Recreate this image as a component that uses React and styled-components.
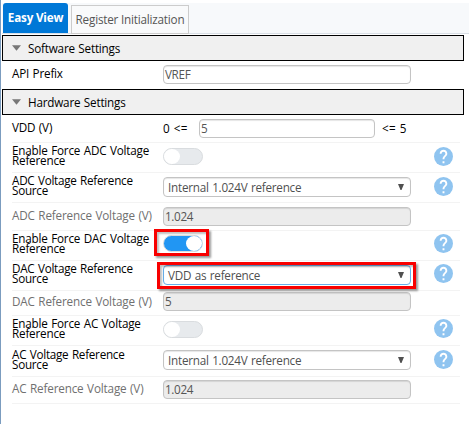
import React from "react";
import styled, { createGlobalStyle, css } from "styled-components";

const GlobalStyle = createGlobalStyle`
  *, *::before, *::after { box-sizing: border-box; }
  body { margin: 0; background: #fff; overflow: hidden; }
`;

const Panel = styled.main`
  height: 424px;
  border-left: 1px solid #7b9cbf;
  padding: 3px 2px 0 1px;
  background: #fff;
  color: #000;
  font-family: "Open Sans", "Noto Sans", sans-serif;
  font-size: 11.7px;
  word-spacing: 0.7px;
  white-space: nowrap;
`;

const TabBar = styled.nav`
  display: flex;
  align-items: flex-end;
  gap: 3px;
  height: 32px;
  padding: 0 0 1px 1px;
  background: linear-gradient(#f7f9fb 30px, #d9dfe6 30px, #d9dfe6 31px, #fff 31px);
`;

const Tab = styled.button`
  margin: 0;
  padding: 0 0 2px;
  font: inherit;
  text-align: center;
  white-space: nowrap;
  ${({ $active }) =>
    $active
      ? css`
          width: 65px;
          height: 30px;
          margin-bottom: 1px;
          border: 0;
          border-radius: 3px 3px 0 0;
          background: #0078d7;
          color: #fff;
          font-weight: 700;
          letter-spacing: -0.2px;
        `
      : css`
          width: 118px;
          height: 29px;
          border: 1px solid #ccc;
          background: #f9fafb;
          color: #555;
          letter-spacing: -0.2px;
        `}
`;

const SectionHeader = styled.h2`
  display: flex;
  align-items: center;
  gap: 7px;
  width: 462px;
  height: 26px;
  margin: 0;
  padding: 0 0 0 9px;
  border: 1px solid #000;
  background: #f0f0f0;
  font-size: 11.7px;
  font-weight: 400;
  letter-spacing: -0.2px;
`;

const Row = styled.div`
  display: grid;
  grid-template-columns: 151px 271px 26px;
  height: ${({ $height }) => $height}px;
  width: 448px;
  margin-left: 10px;
  border-bottom: 1px solid ${({ $plain }) => ($plain ? "transparent" : "#f3f3f3")};
`;

const Label = styled.label`
  padding-top: ${({ $top }) => $top}px;
  line-height: ${({ $double }) => ($double ? 10 : 16)}px;
  color: ${({ $muted }) => ($muted ? "#707070" : "#000")};
  letter-spacing: ${({ $spacing = -0.2 }) => $spacing}px;
`;

const LabelLine = styled.span`
  display: block;
`;

const Control = styled.div`
  display: flex;
  align-items: flex-start;
  padding-top: ${({ $top }) => $top}px;
`;

const Field = styled.div`
  width: ${({ $width = 248 }) => $width}px;
  height: 19px;
  padding-left: 1px;
  border: 1px solid #c4c4c4;
  border-radius: 4px;
  background: ${({ $disabled }) => ($disabled ? "#ececec" : "#fff")};
  box-shadow: inset 0 1px 1px rgba(0, 0, 0, 0.1);
  color: #555;
  line-height: 16px;
  letter-spacing: -0.35px;
`;

const Bound = styled.span`
  width: ${({ $width }) => $width}px;
  padding-left: ${({ $left = 0 }) => $left}px;
  line-height: 19px;
  letter-spacing: 0.2px;
`;

const Select = styled.div`
  display: flex;
  justify-content: space-between;
  width: 248px;
  height: 20px;
  padding: 0 5px 0 4px;
  border: 1px solid ${({ $focused }) => ($focused ? "#66afe9" : "#c4c4c4")};
  border-radius: 4px;
  background: #fff;
  box-shadow: inset 0 1px 1px rgba(0, 0, 0, 0.1);
  color: #505050;
  line-height: 18px;
  letter-spacing: -0.24px;
`;

const SelectArrow = styled.svg`
  width: 8px;
  height: 8px;
  margin-top: 5px;
  fill: #505050;
`;

const Track = styled.div`
  display: flex;
  justify-content: ${({ $on }) => ($on ? "flex-end" : "flex-start")};
  width: 40px;
  height: 17px;
  border: 1px solid ${({ $on }) => ($on ? "#dedede" : "#d9dcdf")};
  border-radius: 9px;
  background: ${({ $on }) => ($on ? "#2196f3" : "#e7eaed")};
`;

const Knob = styled.span`
  width: 16px;
  height: 15px;
  border-radius: 50%;
  background: #fff;
`;

const Callout = styled.div`
  position: relative;

  &::after {
    content: "";
    position: absolute;
    pointer-events: none;
    border: 3px solid #f80000;
    box-shadow: 2px 2px 2px rgba(0, 0, 0, 0.4), inset 2px 2px 2px rgba(0, 0, 0, 0.25);
    ${({ $kind }) =>
      $kind === "toggle"
        ? css`
            left: -9px;
            top: -6px;
            width: 55px;
            height: 27px;
          `
        : css`
            left: -6px;
            top: -3px;
            width: 259px;
            height: 27px;
          `}
  }
`;

const HelpIcon = styled.svg`
  width: 19px;
  height: 19px;
  margin-top: ${({ $top }) => $top}px;
`;

const Disclosure = styled.svg`
  width: 9px;
  height: 6px;
  fill: #777;
`;

function Section({ title }) {
  return (
    <SectionHeader>
      <Disclosure viewBox="0 0 10 6">
        <path d="M0 0H10L5 6Z" />
      </Disclosure>
      {title}
    </SectionHeader>
  );
}

function Help({ top }) {
  return (
    <HelpIcon $top={top} viewBox="2 2 20 20">
      <circle cx="12" cy="12" r="10" fill="#8fc4f0" />
      <path
        fill="#fff"
        d="M13 19h-2v-2h2v2zm2.07-7.75-.9.92C13.45 12.9 13 13.5 13 15h-2v-.5c0-1.1.45-2.1 1.17-2.83l1.24-1.26c.37-.36.59-.86.59-1.41 0-1.1-.9-2-2-2s-2 .9-2 2H8c0-2.21 1.79-4 4-4s4 1.79 4 4c0 .88-.36 1.68-.93 2.25z"
      />
    </HelpIcon>
  );
}

function Toggle({ on }) {
  return (
    <Track $on={on}>
      <Knob />
    </Track>
  );
}

function Dropdown({ value, focused }) {
  return (
    <Select $focused={focused}>
      {value}
      <SelectArrow viewBox="0 0 8 8">
        <path d="M1 1H7L4.5 7H3.5Z" />
      </SelectArrow>
    </Select>
  );
}

const groups = [
  {
    name: "ADC", source: "Internal 1.024V reference", voltage: "1.024",
    heights: [30, 30, 28], labelTops: [2, 2, 4], controlTops: [5, 4, 4], helpTops: [4, 4],
  },
  {
    name: "DAC", source: "VDD as reference", voltage: "5", highlighted: true,
    heights: [30, 30, 25], labelTops: [2, 2, 2], controlTops: [4, 4, 1], helpTops: [3, 3],
  },
  {
    name: "AC", source: "Internal 1.024V reference", voltage: "1.024",
    heights: [30, 31, 27], labelTops: [2, 3, 3], controlTops: [5, 4, 3], helpTops: [3, 4],
  },
];

function ReferenceGroup({ group }) {
  const { name, source, voltage, highlighted, heights, labelTops, controlTops, helpTops } = group;
  const toggle = <Toggle on={highlighted} />;
  const dropdown = <Dropdown value={source} focused={highlighted} />;
  return (
    <>
      <Row $height={heights[0]}>
        <Label $double $top={labelTops[0]}>
          <LabelLine>Enable Force {name} Voltage</LabelLine>
          <LabelLine>Reference</LabelLine>
        </Label>
        <Control $top={controlTops[0]}>
          {highlighted ? <Callout $kind="toggle">{toggle}</Callout> : toggle}
        </Control>
        <Help top={helpTops[0]} />
      </Row>
      <Row $height={heights[1]}>
        <Label $double $top={labelTops[1]} $spacing={-0.26}>
          <LabelLine>{name} Voltage Reference</LabelLine>
          <LabelLine>Source</LabelLine>
        </Label>
        <Control $top={controlTops[1]}>
          {highlighted ? <Callout $kind="select">{dropdown}</Callout> : dropdown}
        </Control>
        <Help top={helpTops[1]} />
      </Row>
      <Row $height={heights[2]}>
        <Label $muted $top={labelTops[2]} $spacing={-0.16}>{name} Reference Voltage (V)</Label>
        <Control $top={controlTops[2]}>
          <Field $disabled>{voltage}</Field>
        </Control>
      </Row>
    </>
  );
}

export default function App() {
  return (
    <>
      <GlobalStyle />
      <Panel>
        <TabBar>
          <Tab $active>Easy View</Tab>
          <Tab>Register Initialization</Tab>
        </TabBar>
        <Section title="Software Settings" />
        <Row $height={28} $plain>
          <Label $top={4}>API Prefix</Label>
          <Control $top={4}>
            <Field>VREF</Field>
          </Control>
        </Row>
        <Section title="Hardware Settings" />
        <Row $height={28}>
          <Label $top={4}>VDD (V)</Label>
          <Control $top={4}>
            <Bound $width={36}>0 &lt;=</Bound>
            <Field $width={176}>5</Field>
            <Bound $width={50} $left={7}>&lt;= 5</Bound>
          </Control>
        </Row>
        {groups.map((group) => (
          <ReferenceGroup key={group.name} group={group} />
        ))}
      </Panel>
    </>
  );
}
